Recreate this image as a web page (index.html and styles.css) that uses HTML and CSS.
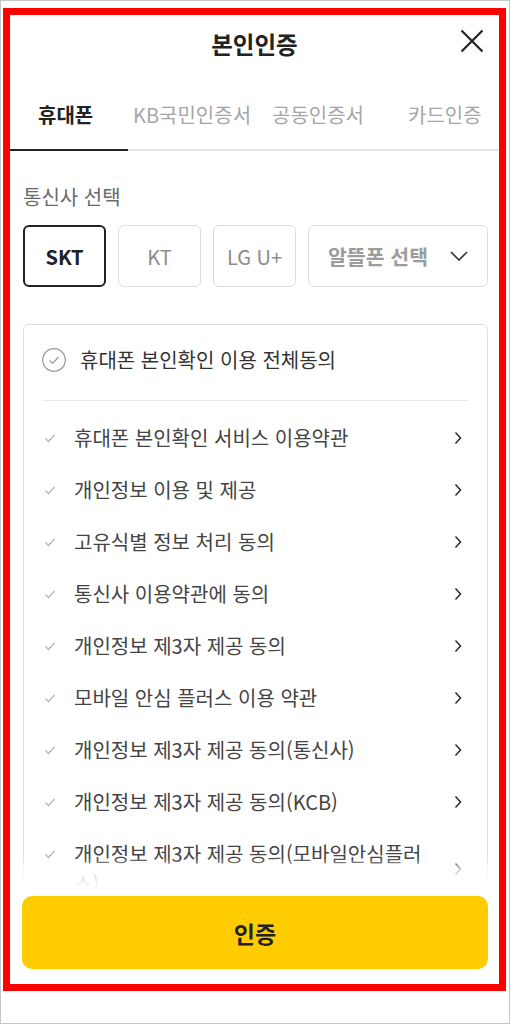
FILE: index.html
```html
<!DOCTYPE html>
<html lang="ko">
<head>
<meta charset="utf-8">
<title>본인인증</title>
<link rel="stylesheet" href="styles.css">
</head>
<body>
<div class="page">
  <div class="frame">
    <header class="header">
      <h1 class="title">본인인증</h1>
      <button class="close" aria-label="닫기">
        <svg width="24" height="24" viewBox="0 0 24 24"><path d="M1.5 1.5 L22.5 22.5 M22.5 1.5 L1.5 22.5" stroke="#222" stroke-width="2.2" fill="none"/></svg>
      </button>
    </header>
    <nav class="tabs">
      <span class="tab tab-active">휴대폰</span>
      <span class="tab">KB국민인증서</span>
      <span class="tab">공동인증서</span>
      <span class="tab">카드인증</span>
    </nav>
    <section class="content">
      <p class="label">통신사 선택</p>
      <div class="carriers">
        <button class="carrier carrier-on">SKT</button>
        <button class="carrier">KT</button>
        <button class="carrier">LG U+</button>
        <button class="carrier carrier-select">
          <span>알뜰폰 선택</span>
          <svg width="18" height="10" viewBox="0 0 18 10"><path d="M1 1 L9 9 L17 1" stroke="#333" stroke-width="1.6" fill="none"/></svg>
        </button>
      </div>
      <div class="terms">
        <div class="terms-all">
          <svg class="circle-check" width="24" height="24" viewBox="0 0 24 24"><circle cx="12" cy="12" r="11.3" stroke="#9a9a9a" stroke-width="1.2" fill="#fff"/><path d="M7.5 12.5 L10.7 15.5 L16.5 9" stroke="#9a9a9a" stroke-width="1.2" fill="none"/></svg>
          <span class="terms-all-text">휴대폰 본인확인 이용 전체동의</span>
        </div>
        <ul class="terms-list">
          <li class="term"><svg class="check" width="12" height="12" viewBox="0 0 12 12"><path d="M1.5 6.5 L4.5 9.5 L10.5 3" stroke="#b8b8b8" stroke-width="1.3" fill="none"/></svg><span class="term-text">휴대폰 본인확인 서비스 이용약관</span><svg class="chev" width="8" height="14" viewBox="0 0 8 14"><path d="M1.5 1.5 L6.5 7 L1.5 12.5" stroke="#333" stroke-width="1.6" fill="none"/></svg></li>
          <li class="term"><svg class="check" width="12" height="12" viewBox="0 0 12 12"><path d="M1.5 6.5 L4.5 9.5 L10.5 3" stroke="#b8b8b8" stroke-width="1.3" fill="none"/></svg><span class="term-text">개인정보 이용 및 제공</span><svg class="chev" width="8" height="14" viewBox="0 0 8 14"><path d="M1.5 1.5 L6.5 7 L1.5 12.5" stroke="#333" stroke-width="1.6" fill="none"/></svg></li>
          <li class="term"><svg class="check" width="12" height="12" viewBox="0 0 12 12"><path d="M1.5 6.5 L4.5 9.5 L10.5 3" stroke="#b8b8b8" stroke-width="1.3" fill="none"/></svg><span class="term-text">고유식별 정보 처리 동의</span><svg class="chev" width="8" height="14" viewBox="0 0 8 14"><path d="M1.5 1.5 L6.5 7 L1.5 12.5" stroke="#333" stroke-width="1.6" fill="none"/></svg></li>
          <li class="term"><svg class="check" width="12" height="12" viewBox="0 0 12 12"><path d="M1.5 6.5 L4.5 9.5 L10.5 3" stroke="#b8b8b8" stroke-width="1.3" fill="none"/></svg><span class="term-text">통신사 이용약관에 동의</span><svg class="chev" width="8" height="14" viewBox="0 0 8 14"><path d="M1.5 1.5 L6.5 7 L1.5 12.5" stroke="#333" stroke-width="1.6" fill="none"/></svg></li>
          <li class="term"><svg class="check" width="12" height="12" viewBox="0 0 12 12"><path d="M1.5 6.5 L4.5 9.5 L10.5 3" stroke="#b8b8b8" stroke-width="1.3" fill="none"/></svg><span class="term-text">개인정보 제3자 제공 동의</span><svg class="chev" width="8" height="14" viewBox="0 0 8 14"><path d="M1.5 1.5 L6.5 7 L1.5 12.5" stroke="#333" stroke-width="1.6" fill="none"/></svg></li>
          <li class="term"><svg class="check" width="12" height="12" viewBox="0 0 12 12"><path d="M1.5 6.5 L4.5 9.5 L10.5 3" stroke="#b8b8b8" stroke-width="1.3" fill="none"/></svg><span class="term-text">모바일 안심 플러스 이용 약관</span><svg class="chev" width="8" height="14" viewBox="0 0 8 14"><path d="M1.5 1.5 L6.5 7 L1.5 12.5" stroke="#333" stroke-width="1.6" fill="none"/></svg></li>
          <li class="term"><svg class="check" width="12" height="12" viewBox="0 0 12 12"><path d="M1.5 6.5 L4.5 9.5 L10.5 3" stroke="#b8b8b8" stroke-width="1.3" fill="none"/></svg><span class="term-text">개인정보 제3자 제공 동의(통신사)</span><svg class="chev" width="8" height="14" viewBox="0 0 8 14"><path d="M1.5 1.5 L6.5 7 L1.5 12.5" stroke="#333" stroke-width="1.6" fill="none"/></svg></li>
          <li class="term"><svg class="check" width="12" height="12" viewBox="0 0 12 12"><path d="M1.5 6.5 L4.5 9.5 L10.5 3" stroke="#b8b8b8" stroke-width="1.3" fill="none"/></svg><span class="term-text">개인정보 제3자 제공 동의(KCB)</span><svg class="chev" width="8" height="14" viewBox="0 0 8 14"><path d="M1.5 1.5 L6.5 7 L1.5 12.5" stroke="#333" stroke-width="1.6" fill="none"/></svg></li>
          <li class="term"><svg class="check" width="12" height="12" viewBox="0 0 12 12"><path d="M1.5 6.5 L4.5 9.5 L10.5 3" stroke="#b8b8b8" stroke-width="1.3" fill="none"/></svg><span class="term-text">개인정보 제3자 제공 동의(모바일안심플러스)</span><svg class="chev" width="8" height="14" viewBox="0 0 8 14"><path d="M1.5 1.5 L6.5 7 L1.5 12.5" stroke="#333" stroke-width="1.6" fill="none"/></svg></li>
        </ul>
      </div>
    </section>
    <div class="footer">
      <button class="submit">인증</button>
    </div>
  </div>
</div>
</body>
</html>
```

FILE: styles.css
```css
* { box-sizing: border-box; }
html, body { margin: 0; padding: 0; background: #fff; }
body {
  font-family: "Noto Sans CJK KR", "Noto Sans", sans-serif;
  color: #222;
}
.page {
  width: 510px;
  height: 1024px;
  border: 1px solid #c6c6c6;
  padding: 7px 2px 0 2px;
  background: #fff;
}
.frame {
  position: relative;
  width: 503px;
  height: 983px;
  border: 7px solid #ff0000;
  background: #fff;
  overflow: hidden;
}
.header {
  position: relative;
  height: 58px;
  display: flex;
  align-items: center;
  justify-content: center;
}
.title {
  margin: 0;
  font-size: 23.5px;
  font-weight: 700;
  line-height: 58px;
  color: #222;
}
.close {
  position: absolute;
  right: 15px;
  top: 14px;
  width: 24px;
  height: 24px;
  padding: 0;
  border: 0;
  background: none;
  display: flex;
}
.tabs {
  display: grid;
  grid-template-columns: 118px 139px 136px 1fr;
  align-items: start;
  border-bottom: 2px solid #e6e6e6;
}
.tab {
  padding: 29px 0 21px 5px;
  font-size: 20px;
  line-height: 26px;
  color: #a6a6a6;
  white-space: nowrap;
}
.tab-active {
  padding-left: 28px;
  color: #222;
  font-weight: 700;
  border-bottom: 2px solid #222;
  margin-bottom: -2px;
}
.content {
  padding: 33px 11px 0 13px;
}
.label {
  margin: 0;
  font-size: 20px;
  line-height: 26px;
  color: #6a6a6a;
}
.carriers {
  margin-top: 15px;
  display: grid;
  grid-template-columns: 83px 83px 83px 1fr;
  gap: 12px;
}
.carrier {
  height: 62px;
  border: 1px solid #dcdcdc;
  border-radius: 6px;
  background: #fff;
  font-family: "Noto Sans CJK KR", "Noto Sans", sans-serif;
  font-size: 20px;
  color: #8c8c8c;
  padding: 0;
  display: flex;
  align-items: center;
  justify-content: center;
}
.carrier-on {
  border: 2px solid #222;
  color: #222;
  font-weight: 700;
  font-size: 20px;
}
.carrier-select {
  justify-content: space-between;
  padding: 0 19px 0 19px;
  font-size: 20.5px;
  font-weight: 700;
  color: #9c9c9c;
}
.terms {
  margin-top: 37px;
  border: 1px solid #dedede;
  border-radius: 6px;
  height: 700px;
}
.terms-all {
  display: flex;
  align-items: center;
  margin: 0 19px 0 18px;
  padding: 18px 0 23px;
  border-bottom: 1px solid #e8e8e8;
}
.circle-check {
  flex: none;
}
.terms-all-text {
  margin-left: 14px;
  font-size: 20px;
  line-height: 34px;
  color: #333;
}
.terms-list {
  list-style: none;
  margin: 0;
  padding: 11px 0 0;
}
.term {
  display: flex;
  align-items: center;
  padding: 11px 25px 11px 20px;
}
.check {
  flex: none;
  align-self: flex-start;
  margin-top: 9px;
}
.term-text {
  flex: 1;
  margin: 0 18px 0 18px;
  font-size: 20px;
  line-height: 30px;
  color: #444;
}
.chev { flex: none; }
.footer {
  position: absolute;
  left: 0;
  right: 0;
  bottom: 0;
  padding: 38px 11px 15px 12px;
  background: linear-gradient(to bottom, rgba(255,255,255,0) 0, rgba(255,255,255,0.75) 12px, #fff 32px);
}
.submit {
  display: block;
  width: 100%;
  height: 73px;
  border: 0;
  border-radius: 10px;
  background: #ffcc00;
  font-family: "Noto Sans CJK KR", "Noto Sans", sans-serif;
  font-size: 23px;
  font-weight: 700;
  color: #222;
}
```
